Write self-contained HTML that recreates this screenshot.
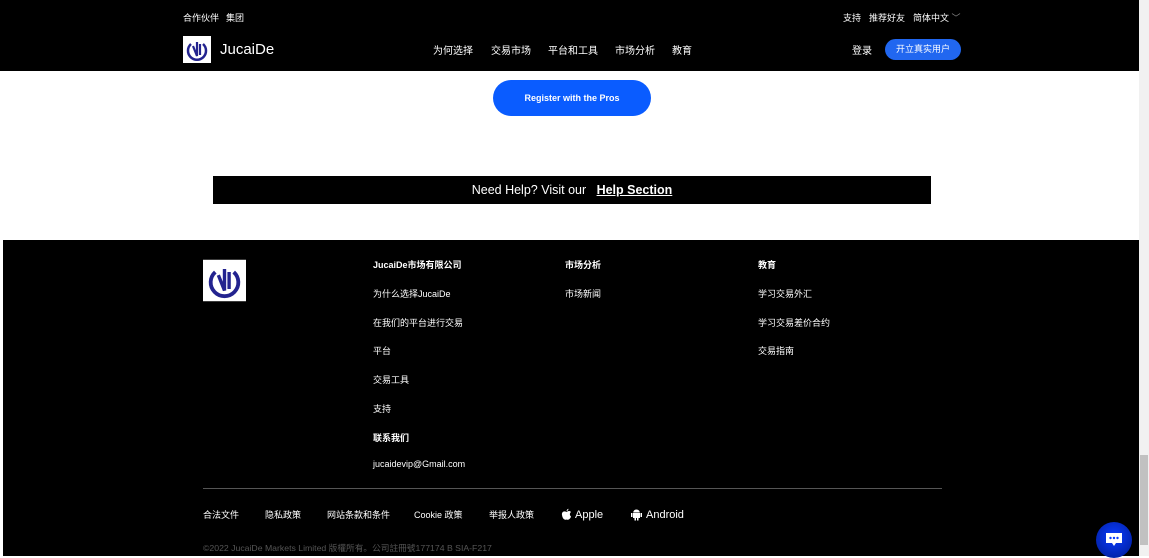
<!DOCTYPE html>
<html><head><meta charset="utf-8"><style>
*{margin:0;padding:0;box-sizing:border-box}
body{width:1149px;height:556px;overflow:hidden;background:#fff;font-family:"Liberation Sans","Noto Sans CJK SC",sans-serif;position:relative;color:#fff}
.a{position:absolute;white-space:nowrap}
.hdr{position:absolute;left:0;top:0;width:1139px;height:71px;background:#000}
.ft{position:absolute;left:3px;top:240px;width:1136px;height:316px;background:#000}
.sb{position:absolute;left:1139px;top:0;width:10px;height:556px;background:#f1f1f1}
.s{font-size:9px}
.n{font-size:10px}
</style></head><body>
<div class="hdr"></div>
<div class="a s" style="left:183px;top:11px">合作伙伴</div>
<div class="a s" style="left:226px;top:11px">集团</div>
<div class="a s" style="left:843px;top:11px">支持</div>
<div class="a s" style="left:869px;top:11px">推荐好友</div>
<div class="a s" style="left:913px;top:11px">简体中文 <span style="color:#888">﹀</span></div>
<svg class="a" style="left:183px;top:36px" width="28" height="27" viewBox="0 0 28 27"><rect width="28" height="27" fill="#fff"/><path d="M8 8 A9 9 0 1 0 20 8" stroke="#23238f" stroke-width="2.5" fill="none"/><path d="M10 10 L14 20 L14 6 M17 8 L17 19" stroke="#23238f" stroke-width="2.2" fill="none"/></svg>
<div class="a" style="left:220px;top:41px;font-size:15px">JucaiDe</div>
<div class="a n" style="left:433px;top:42px">为何选择</div>
<div class="a n" style="left:491px;top:42px">交易市场</div>
<div class="a n" style="left:548px;top:42px">平台和工具</div>
<div class="a n" style="left:615px;top:42px">市场分析</div>
<div class="a n" style="left:672px;top:42px">教育</div>
<div class="a n" style="left:852px;top:42px">登录</div>
<div class="a" style="left:885px;top:39px;width:76px;height:21px;border-radius:11px;background:#2167f0;font-size:9px;text-align:center;line-height:21px">开立真实用户</div>
<div class="a" style="left:493px;top:80px;width:158px;height:36px;border-radius:18px;background:#0a5cff;font-size:9px;font-weight:bold;text-align:center;line-height:36px">Register with the Pros</div>
<div class="a" style="left:213px;top:176px;width:718px;height:28px;background:#000;font-size:12.5px;text-align:center;line-height:29px">Need Help? Visit our &nbsp; <b style="text-decoration:underline">Help Section</b></div>
<div class="ft"></div>
<svg class="a" style="left:203px;top:259px" width="43" height="43" viewBox="0 0 28 27"><rect width="28" height="27" fill="#fff"/><path d="M8 8 A9 9 0 1 0 20 8" stroke="#23238f" stroke-width="2.5" fill="none"/><path d="M10 10 L14 20 L14 6 M17 8 L17 19" stroke="#23238f" stroke-width="2.2" fill="none"/></svg>
<div class="a s" style="left:373px;top:258px;font-weight:bold">JucaiDe市场有限公司</div>
<div class="a s" style="left:373px;top:287px">为什么选择JucaiDe</div>
<div class="a s" style="left:373px;top:316px">在我们的平台进行交易</div>
<div class="a s" style="left:373px;top:344px">平台</div>
<div class="a s" style="left:373px;top:373px">交易工具</div>
<div class="a s" style="left:373px;top:402px">支持</div>
<div class="a s" style="left:373px;top:431px;font-weight:bold">联系我们</div>
<div class="a s" style="left:373px;top:459px">jucaidevip@Gmail.com</div>
<div class="a s" style="left:565px;top:258px;font-weight:bold">市场分析</div>
<div class="a s" style="left:565px;top:287px">市场新闻</div>
<div class="a s" style="left:758px;top:258px;font-weight:bold">教育</div>
<div class="a s" style="left:758px;top:287px">学习交易外汇</div>
<div class="a s" style="left:758px;top:316px">学习交易差价合约</div>
<div class="a s" style="left:758px;top:344px">交易指南</div>
<div class="a" style="left:203px;top:488px;width:739px;height:1px;background:#555"></div>
<div class="a s" style="left:203px;top:508px">合法文件</div>
<div class="a s" style="left:265px;top:508px">隐私政策</div>
<div class="a s" style="left:327px;top:508px">网站条款和条件</div>
<div class="a s" style="left:414px;top:508px">Cookie 政策</div>
<div class="a s" style="left:489px;top:508px">举报人政策</div>
<svg class="a" style="left:561px;top:508px" width="11" height="13" viewBox="0 0 11 13"><path d="M5.5 4 C3 2.5 0.5 4 1 7 C1.5 10.5 3.5 12.5 5.5 11.5 C7.5 12.5 9.5 10.5 10 8.5 C8.5 7.5 8.5 5 10 4 C8.5 2.5 7 3 5.5 4Z M5.5 3.3 C5.5 2 6.5 1 7.5 0.8 C7.5 2 6.5 3 5.5 3.3Z" fill="#fff"/></svg>
<div class="a" style="left:575px;top:509px;font-size:11px">Apple</div>
<svg class="a" style="left:631px;top:508px" width="11" height="13" viewBox="0 0 11 13"><path d="M2 5 H9 V10 H2Z M2.2 4.5 A3.3 3 0 0 1 8.8 4.5Z M0 5 H1.5 V9 H0Z M9.5 5 H11 V9 H9.5Z M3.5 10 H5 V12.5 H3.5Z M6 10 H7.5 V12.5 H6Z" fill="#fff"/></svg>
<div class="a" style="left:646px;top:509px;font-size:11px">Android</div>
<div class="a" style="left:203px;top:541px;color:#555;font-size:8.7px">©2022 JucaiDe Markets Limited 版權所有。公司註冊號177174 B SIA-F217</div>
<div class="a" style="left:1096px;top:522px;width:36px;height:36px;border-radius:50%;background:radial-gradient(circle at 50% 40%,#0a3cff,#001a90)"></div>
<svg class="a" style="left:1105px;top:532px" width="18" height="16" viewBox="0 0 18 16"><path d="M1 1 H17 V11 H11 L9 14 L7 11 H1Z" fill="#fff"/><circle cx="5.5" cy="6" r="1.2" fill="#0a3cff"/><circle cx="9" cy="6" r="1.2" fill="#0a3cff"/><circle cx="12.5" cy="6" r="1.2" fill="#0a3cff"/></svg>
<div class="sb"><div style="position:absolute;left:1px;top:455px;width:8px;height:90px;background:#c1c1c1"></div></div>
</body></html>
